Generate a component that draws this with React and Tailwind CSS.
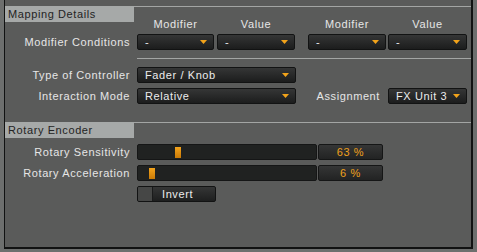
import React from "react";

const Arrow = () => (
  <svg width="7" height="4" viewBox="0 0 7 4" className="shrink-0">
    <polygon points="0,0 7,0 3.5,4" fill="#f2a31a" />
  </svg>
);

const Drop = ({ w, text }) => (
  <div
    className={`${w} h-4 flex items-center justify-between pl-[7px] pr-[6px] rounded-[2px] border border-[#121313] bg-gradient-to-b from-[#353636] to-[#1c1d1d] text-[#ececec] leading-none`}
  >
    <span>{text}</span>
    <Arrow />
  </div>
);

const Label = ({ children }) => (
  <div className="w-[132px] pr-[7px] text-right text-[#e6e6e6] leading-4 whitespace-nowrap">{children}</div>
);

const Header = ({ children }) => (
  <div className="flex h-4">
    <div className="w-[129px] h-4 bg-[#a6a9a8] text-[#232323] pl-[3px] leading-4">{children}</div>
    <div className="flex-1 border-t border-[#a3a5a4]" />
  </div>
);

const Slider = ({ pos, value }) => (
  <div className="flex h-4">
    <div className="relative w-[180px] h-4 rounded-[2px] border border-[#151616] bg-[#202221]">
      <div
        className="absolute top-[2px] w-[6px] h-[11px] bg-gradient-to-b from-[#f5a51c] to-[#c97a06]"
        style={{ left: pos }}
      />
    </div>
    <div className="ml-[1px] w-[65px] h-4 rounded-[2px] border border-[#151616] bg-gradient-to-b from-[#353636] to-[#222323] text-center text-[#f0a21c] leading-[14px]">
      {value}
    </div>
  </div>
);

export default function App() {
  return (
    <div className="w-[477px] h-[252px] bg-[#6d6f6e] pl-[4px] font-['Liberation_Sans',Arial,sans-serif] text-[11px] tracking-[0.6px]">
      <div className="w-[469px] h-[249px] bg-[#5a5b5a] border-l border-r-2 border-b-2 border-[#111212] pt-[6px]">
        <Header>Mapping Details</Header>
        <div className="flex -mt-[4px] h-[12px] leading-[12px] pl-[132px] text-[#e6e6e6]">
          <div className="w-[77px] text-center">Modifier</div>
          <div className="ml-[3px] w-[78px] text-center">Value</div>
          <div className="ml-[13px] w-[78px] text-center">Modifier</div>
          <div className="ml-[2px] w-[79px] text-center">Value</div>
        </div>
        <div className="flex mt-[4px] h-4">
          <Label>Modifier Conditions</Label>
          <Drop w="w-[77px]" text="-" />
          <div className="ml-[3px]"><Drop w="w-[78px]" text="-" /></div>
          <div className="ml-[13px]"><Drop w="w-[78px]" text="-" /></div>
          <div className="ml-[2px]"><Drop w="w-[79px]" text="-" /></div>
        </div>
        <div className="mt-[8px] ml-[132px] h-px bg-[#a3a5a4]" />
        <div className="flex mt-[8px] h-4">
          <Label>Type of Controller</Label>
          <Drop w="w-[159px]" text="Fader / Knob" />
        </div>
        <div className="flex mt-[5px] h-4">
          <Label>Interaction Mode</Label>
          <Drop w="w-[159px]" text="Relative" />
          <div className="w-[84px] text-right text-[#e6e6e6] leading-4">Assignment</div>
          <div className="ml-[8px]"><Drop w="w-[79px]" text="FX Unit 3" /></div>
        </div>
        <div className="mt-[18px]">
          <Header>Rotary Encoder</Header>
        </div>
        <div className="flex mt-[6px] h-4">
          <Label>Rotary Sensitivity</Label>
          <Slider pos={37} value="63 %" />
        </div>
        <div className="flex mt-[5px] h-4">
          <Label>Rotary Acceleration</Label>
          <Slider pos={11} value="6 %" />
        </div>
        <div className="flex mt-[5px] h-4 pl-[132px]">
          <div className="flex w-[79px] h-4 rounded-[2px] border border-[#121313] bg-gradient-to-b from-[#353636] to-[#1e1f1f] overflow-hidden">
            <div className="w-[15px] h-full bg-[#464746] border-r border-[#1a1b1b]" />
            <div className="pl-[9px] text-[#ececec] leading-[14px]">Invert</div>
          </div>
        </div>
      </div>
    </div>
  );
}
